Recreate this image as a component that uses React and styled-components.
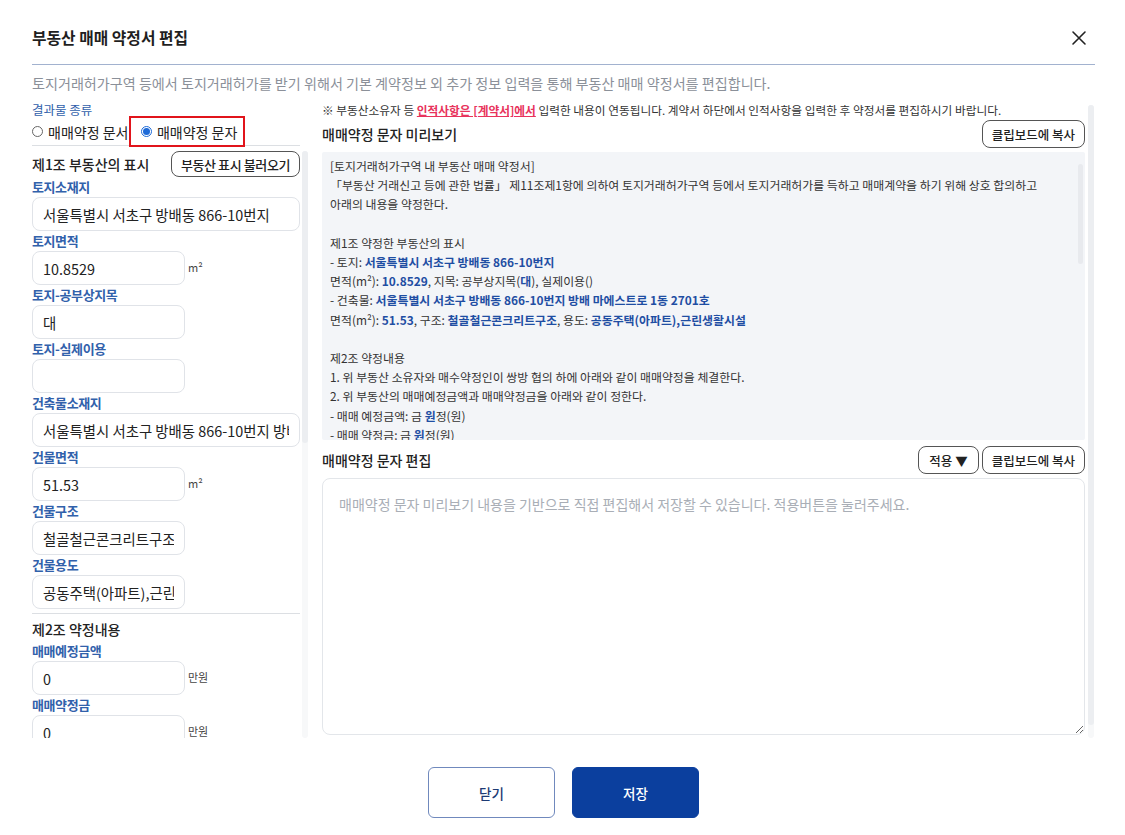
import React from 'react';
import styled, { createGlobalStyle } from 'styled-components';

const GlobalStyle = createGlobalStyle`
  html, body { margin: 0; padding: 0; background: #fff; }
  body { font-family: "Noto Sans CJK KR", "Noto Sans", sans-serif; color: #222; }
  * { box-sizing: border-box; }
`;

const Modal = styled.div`
  width: 1125px;
  height: 835px;
  display: flex;
  flex-direction: column;
  padding: 0 30px 0 32px;
  overflow: hidden;
`;

const Header = styled.div`
  display: flex;
  align-items: center;
  justify-content: space-between;
  padding: 26px 8px 14px 0;
  border-bottom: 1.5px solid #a2b2cf;
`;

const Title = styled.h1`
  margin: 0;
  font-size: 15.8px;
  font-weight: 700;
  line-height: 24px;
  color: #1f1f1f;
`;

const CloseButton = styled.button`
  width: 16px;
  height: 16px;
  padding: 0;
  border: 0;
  background: none;
  display: flex;
  cursor: pointer;
`;

const Subtitle = styled.p`
  margin: 8px 0 0;
  font-size: 14.1px;
  line-height: 20px;
  color: #8b9099;
  white-space: nowrap;
`;

const Main = styled.div`
  display: flex;
  gap: 12px;
  margin-top: 9px;
  height: 636px;
`;

const LeftColumn = styled.div`
  width: 278px;
  display: flex;
  flex-direction: column;
  min-height: 0;
`;

const SmallLabel = styled.div`
  font-size: 12.5px;
  line-height: 16px;
  color: #3161ab;
`;

const RadioRow = styled.div`
  display: flex;
  align-items: center;
  gap: 3px;
  height: 28px;
  width: 268px;
  border-bottom: 1px solid #dcdfe3;
`;

const RadioOption = styled.label`
  display: flex;
  align-items: center;
  gap: 5px;
  height: 27px;
  padding: ${p => (p.$marked ? '0 6px 0 9.5px' : '0')};
  outline: ${p => (p.$marked ? '2.5px solid #e1141b' : 'none')};
  font-size: 14px;
  color: #222;
  white-space: nowrap;
`;

const RadioDot = styled.span`
  width: 11px;
  height: 11px;
  border-radius: 50%;
  border: 1px solid ${p => (p.$on ? '#1d6ad8' : '#666')};
  display: inline-flex;
  align-items: center;
  justify-content: center;
  flex: none;
  &::after {
    content: '';
    width: 7px;
    height: 7px;
    border-radius: 50%;
    background: #1d6ad8;
    display: ${p => (p.$on ? 'block' : 'none')};
  }
`;

const ScrollBody = styled.div`
  display: flex;
  flex: 1;
  min-height: 0;
`;

const LeftScroll = styled.div`
  width: 268px;
  margin-top: 3px;
  overflow: hidden;
`;

const Track = styled.div`
  width: ${p => p.$w || 6}px;
  margin: ${p => p.$m || '0'};
  border-radius: 3px;
  background: ${p => p.$bg || '#f7f8f9'};
  display: flex;
  flex-direction: column;
`;

const Thumb = styled.div`
  height: ${p => p.$h};
  border-radius: 3px;
  background: ${p => p.$c || '#eceef1'};
`;

const SectionHead = styled.div`
  display: flex;
  align-items: center;
  justify-content: space-between;
  height: 26px;
  margin-top: 2px;
`;

const SectionTitle = styled.div`
  font-size: 14px;
  font-weight: 500;
  line-height: 24px;
  color: #222;
  margin-top: ${p => p.$gap || 0}px;
`;

const OutlineButton = styled.button`
  height: ${p => p.$h || 28}px;
  padding: 0 ${p => p.$px || 9}px;
  border: 1px solid #555;
  border-radius: 8px;
  background: #fff;
  font-family: inherit;
  font-size: ${p => p.$size || 12.5}px;
  font-weight: 500;
  letter-spacing: ${p => p.$ls || 0}px;
  color: #222;
  white-space: nowrap;
  cursor: pointer;
`;

const FieldLabel = styled.div`
  height: 20px;
  font-size: 13px;
  font-weight: 700;
  letter-spacing: -0.4px;
  line-height: 20px;
  color: #3161ab;
`;

const FieldRow = styled.div`
  display: flex;
  align-items: center;
`;

const TextInput = styled.input`
  width: ${p => (p.$wide ? '100%' : '153px')};
  height: 34px;
  padding: 0 10px;
  border: 1px solid #e0e3e8;
  border-radius: 8px;
  font-family: inherit;
  font-size: 14.4px;
  color: #222;
  background: #fff;
  outline: none;
`;

const Unit = styled.span`
  margin-left: 3px;
  margin-top: -2px;
  font-size: 11px;
  color: #444;
`;

const Divider = styled.div`
  height: 1px;
  margin-top: 4px;
  background: #dcdfe3;
`;

const RightColumn = styled.div`
  flex: 1;
  min-width: 0;
  display: flex;
`;

const RightInner = styled.div`
  width: 763px;
  display: flex;
  flex-direction: column;
  overflow: hidden;
`;

const Note = styled.div`
  font-size: 11.7px;
  line-height: 16px;
  color: #333;
  white-space: nowrap;
`;

const NoteEm = styled.span`
  color: #e8335c;
  font-weight: 700;
  text-decoration: underline;
`;

const PanelHead = styled.div`
  display: flex;
  align-items: center;
  justify-content: space-between;
  height: 28px;
  margin-top: ${p => p.$gap}px;
  flex: none;
`;

const PanelTitle = styled.div`
  font-size: 14px;
  font-weight: 500;
  color: #222;
`;

const ButtonGroup = styled.div`
  display: flex;
  gap: 3px;
`;

const Preview = styled.div`
  height: 288px;
  flex: none;
  margin-top: 4px;
  display: flex;
  background: #f3f5f8;
  border-radius: 2px;
  overflow: hidden;
`;

const PreviewText = styled.div`
  flex: 1;
  min-width: 0;
  padding: 4px 8px;
  overflow: hidden;
`;

const Line = styled.div`
  min-height: 19.2px;
  font-size: 11.9px;
  line-height: 19.2px;
  color: #333;
  white-space: nowrap;
`;

const Val = styled.b`
  font-weight: 700;
  color: #1f4ea3;
`;

const Editor = styled.textarea`
  display: block;
  flex: none;
  height: 257px;
  margin-top: 4px;
  padding: 15px 16px;
  border: 1px solid #e3e6ea;
  border-radius: 8px;
  font-family: inherit;
  font-size: 14px;
  line-height: 20px;
  color: #222;
  resize: vertical;
  outline: none;
  &::placeholder { color: #a9aeb6; }
`;

const Footer = styled.div`
  display: flex;
  justify-content: center;
  gap: 17px;
  padding-top: 29px;
`;

const FooterButton = styled.button`
  width: 127px;
  height: 51px;
  border-radius: 6px;
  border: 1px solid ${p => (p.$primary ? '#0b3f9e' : '#7089bd')};
  background: ${p => (p.$primary ? '#0b3f9e' : '#fff')};
  color: ${p => (p.$primary ? '#fff' : '#1d3b74')};
  font-family: inherit;
  font-size: 13.5px;
  font-weight: 500;
  cursor: pointer;
`;

const landFields = [
  { label: '토지소재지', value: '서울특별시 서초구 방배동 866-10번지', wide: true },
  { label: '토지면적', value: '10.8529', unit: 'm²' },
  { label: '토지-공부상지목', value: '대' },
  { label: '토지-실제이용', value: '' },
  { label: '건축물소재지', value: '서울특별시 서초구 방배동 866-10번지 방배 마에스트로 1동 2701호', wide: true },
  { label: '건물면적', value: '51.53', unit: 'm²' },
  { label: '건물구조', value: '철골철근콘크리트구조' },
  { label: '건물용도', value: '공동주택(아파트),근린생활시설' },
];

const priceFields = [
  { label: '매매예정금액', value: '0', unit: '만원' },
  { label: '매매약정금', value: '0', unit: '만원' },
];

function Field({ label, value, unit, wide }) {
  return (
    <div>
      <FieldLabel>{label}</FieldLabel>
      <FieldRow>
        <TextInput $wide={wide} defaultValue={value} />
        {unit && <Unit>{unit}</Unit>}
      </FieldRow>
    </div>
  );
}

export default function App() {
  return (
    <>
      <GlobalStyle />
      <Modal>
        <Header>
          <Title>부동산 매매 약정서 편집</Title>
          <CloseButton aria-label="닫기">
            <svg width="16" height="16" viewBox="0 0 16 16">
              <path d="M2 2 L14 14 M14 2 L2 14" stroke="#222" strokeWidth="1.6" strokeLinecap="round" />
            </svg>
          </CloseButton>
        </Header>
        <Subtitle>
          토지거래허가구역 등에서 토지거래허가를 받기 위해서 기본 계약정보 외 추가 정보 입력을 통해 부동산 매매 약정서를 편집합니다.
        </Subtitle>

        <Main>
          <LeftColumn>
            <SmallLabel>결과물 종류</SmallLabel>
            <RadioRow>
              <RadioOption>
                <RadioDot />
                매매약정 문서
              </RadioOption>
              <RadioOption $marked>
                <RadioDot $on />
                매매약정 문자
              </RadioOption>
            </RadioRow>

            <ScrollBody>
              <LeftScroll>
                <SectionHead>
                  <SectionTitle>제1조 부동산의 표시</SectionTitle>
                  <OutlineButton $h={26} $size={13} $ls={-0.4}>부동산 표시 불러오기</OutlineButton>
                </SectionHead>
                {landFields.map(f => <Field key={f.label} {...f} />)}
                <Divider />
                <SectionTitle $gap={3}>제2조 약정내용</SectionTitle>
                {priceFields.map(f => <Field key={f.label} {...f} />)}
              </LeftScroll>
              <Track $m="5px 0 0 2px">
                <Thumb $h="292px" />
              </Track>
            </ScrollBody>
          </LeftColumn>

          <RightColumn>
            <RightInner>
              <Note>
                ※ 부동산소유자 등 <NoteEm>인적사항은 [계약서]에서</NoteEm> 입력한 내용이 연동됩니다. 계약서 하단에서 인적사항을 입력한 후 약정서를 편집하시기 바랍니다.
              </Note>

              <PanelHead $gap={2}>
                <PanelTitle>매매약정 문자 미리보기</PanelTitle>
                <OutlineButton>클립보드에 복사</OutlineButton>
              </PanelHead>
              <Preview>
                <PreviewText>
                  <Line>[토지거래허가구역 내 부동산 매매 약정서]</Line>
                  <Line>「부동산 거래신고 등에 관한 법률」 제11조제1항에 의하여 토지거래허가구역 등에서 토지거래허가를 득하고 매매계약을 하기 위해 상호 합의하고</Line>
                  <Line>아래의 내용을 약정한다.</Line>
                  <Line />
                  <Line>제1조 약정한 부동산의 표시</Line>
                  <Line>- 토지: <Val>서울특별시 서초구 방배동 866-10번지</Val></Line>
                  <Line>면적(m²): <Val>10.8529</Val>, 지목: 공부상지목(<Val>대</Val>), 실제이용()</Line>
                  <Line>- 건축물: <Val>서울특별시 서초구 방배동 866-10번지 방배 마에스트로 1동 2701호</Val></Line>
                  <Line>면적(m²): <Val>51.53</Val>, 구조: <Val>철골철근콘크리트구조</Val>, 용도: <Val>공동주택(아파트),근린생활시설</Val></Line>
                  <Line />
                  <Line>제2조 약정내용</Line>
                  <Line>1. 위 부동산 소유자와 매수약정인이 쌍방 협의 하에 아래와 같이 매매약정을 체결한다.</Line>
                  <Line>2. 위 부동산의 매매예정금액과 매매약정금을 아래와 같이 정한다.</Line>
                  <Line>- 매매 예정금액: 금 <Val>원</Val>정(원)</Line>
                  <Line>- 매매 약정금: 금 <Val>원</Val>정(원)</Line>
                </PreviewText>
                <Track $w={5} $m="12px 2px 0 0" $bg="transparent">
                  <Thumb $h="100px" $c="#e8eaee" />
                </Track>
              </Preview>

              <PanelHead $gap={6}>
                <PanelTitle>매매약정 문자 편집</PanelTitle>
                <ButtonGroup>
                  <OutlineButton $px={10}>적용 ▼</OutlineButton>
                  <OutlineButton>클립보드에 복사</OutlineButton>
                </ButtonGroup>
              </PanelHead>
              <Editor placeholder="매매약정 문자 미리보기 내용을 기반으로 직접 편집해서 저장할 수 있습니다. 적용버튼을 눌러주세요." />
            </RightInner>
            <Track $m="3px 0 0 3px">
              <Thumb $h="620px" />
            </Track>
          </RightColumn>
        </Main>

        <Footer>
          <FooterButton>닫기</FooterButton>
          <FooterButton $primary>저장</FooterButton>
        </Footer>
      </Modal>
    </>
  );
}
